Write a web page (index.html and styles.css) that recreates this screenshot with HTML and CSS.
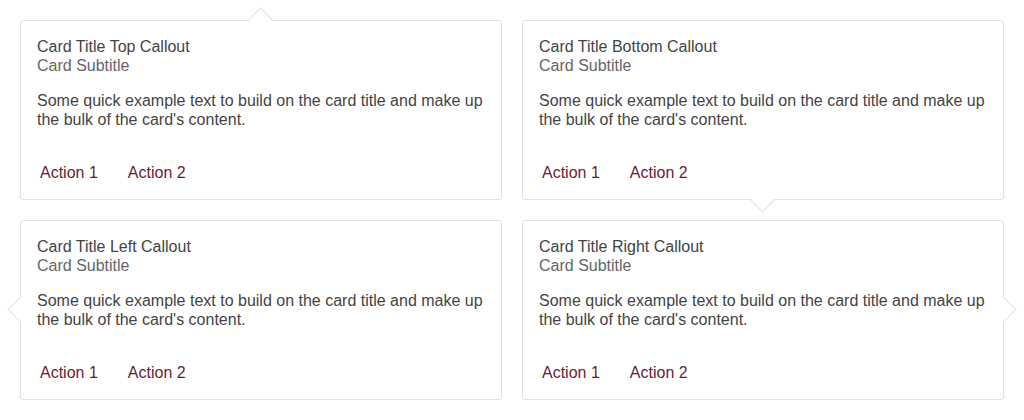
FILE: index.html
```html
<!DOCTYPE html>
<html>
<head>
<meta charset="utf-8">
<link rel="stylesheet" href="styles.css">
</head>
<body>
<div class="grid">
  <div class="card callout-top">
    <div class="card-head">
      <div class="title">Card Title Top Callout</div>
      <div class="subtitle">Card Subtitle</div>
    </div>
    <div class="card-body">Some quick example text to build on the card title and make up the bulk of the card's content.</div>
    <div class="actions"><span class="action">Action 1</span><span class="action">Action 2</span></div>
  </div>
  <div class="card callout-bottom">
    <div class="card-head">
      <div class="title">Card Title Bottom Callout</div>
      <div class="subtitle">Card Subtitle</div>
    </div>
    <div class="card-body">Some quick example text to build on the card title and make up the bulk of the card's content.</div>
    <div class="actions"><span class="action">Action 1</span><span class="action">Action 2</span></div>
  </div>
  <div class="card callout-left">
    <div class="card-head">
      <div class="title">Card Title Left Callout</div>
      <div class="subtitle">Card Subtitle</div>
    </div>
    <div class="card-body">Some quick example text to build on the card title and make up the bulk of the card's content.</div>
    <div class="actions"><span class="action">Action 1</span><span class="action">Action 2</span></div>
  </div>
  <div class="card callout-right">
    <div class="card-head">
      <div class="title">Card Title Right Callout</div>
      <div class="subtitle">Card Subtitle</div>
    </div>
    <div class="card-body">Some quick example text to build on the card title and make up the bulk of the card's content.</div>
    <div class="actions"><span class="action">Action 1</span><span class="action">Action 2</span></div>
  </div>
</div>
</body>
</html>
```
FILE: styles.css
```css
html, body {
  margin: 0;
  padding: 0;
  background: #ffffff;
}
body {
  padding: 20px;
  font-family: "Liberation Sans", Arial, sans-serif;
  font-size: 16px;
  line-height: 19px;
  color: #444444;
}
.grid {
  display: grid;
  grid-template-columns: 1fr 1fr;
  column-gap: 20px;
  row-gap: 20px;
}
.card {
  position: relative;
  background: #ffffff;
  border: 1px solid #e2e2e2;
  border-radius: 3px;
  height: 178px;
  display: flex;
  flex-direction: column;
}
.card-head {
  padding: 16px 16px 0 16px;
}
.title {
  color: #444444;
}
.subtitle {
  color: #666666;
}
.card-body {
  padding: 16px 16px 0 16px;
  color: #444444;
}
.actions {
  margin-top: auto;
  display: flex;
  gap: 30px;
  padding: 0 0 9px 19px;
}
.action {
  display: flex;
  align-items: center;
  height: 36px;
  color: #6b1d2e;
}
.card::before {
  content: "";
  position: absolute;
  width: 16px;
  height: 16px;
  background: #ffffff;
  border: 0 solid #e2e2e2;
  transform: rotate(45deg);
}
.callout-top::before {
  left: calc(50% - 9px);
  top: -10px;
  border-top-width: 1px;
  border-left-width: 1px;
}
.callout-bottom::before {
  left: calc(50% - 9px);
  bottom: -10px;
  border-bottom-width: 1px;
  border-right-width: 1px;
}
.callout-left::before {
  left: -10px;
  top: calc(50% - 9px);
  border-left-width: 1px;
  border-bottom-width: 1px;
}
.callout-right::before {
  right: -10px;
  top: calc(50% - 9px);
  border-top-width: 1px;
  border-right-width: 1px;
}
```
